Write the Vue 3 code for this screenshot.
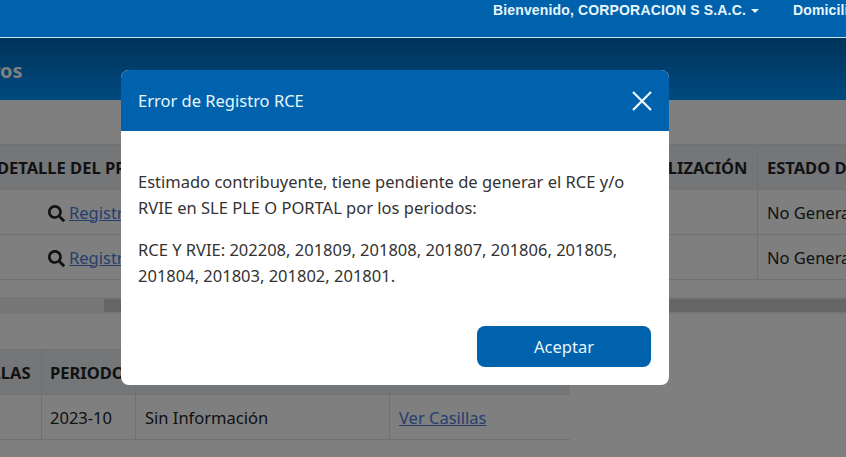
<template>
  <div class="page">
    <header class="topbar">
      <a class="welcome">Bienvenido, CORPORACION S S.A.C.<span class="caret"></span></a>
      <a class="domicilio">Domicilio</a>
    </header>
    <div class="band">
      <span class="band-title">Mis Registros</span>
    </div>
    <main class="content">
      <div class="scroll-wrap">
        <table class="grid grid-top">
          <colgroup>
            <col v-for="w in topCols" :key="w" :style="{ width: `${w}px` }" />
          </colgroup>
          <thead>
            <tr>
              <th>DETALLE DEL PROCESO</th>
              <th></th>
              <th>FECHA DE ACTUALIZACIÓN</th>
              <th>ESTADO DEL REGISTRO</th>
            </tr>
          </thead>
          <tbody>
            <tr v-for="row in 2" :key="row">
              <td class="action">
                <svg class="search" viewBox="0 0 512 512">
                  <path d="M505 442.700L405.300 343c-4.500-4.500-10.600-7-17-7H372c27.600-35.300 44-79.700 44-128C416 93.100 322.900 0 208 0S0 93.100 0 208s93.100 208 208 208c48.300 0 92.700-16.400 128-44v16.300c0 6.400 2.500 12.500 7 17l99.700 99.700c9.400 9.400 24.600 9.400 33.900 0l28.300-28.300c9.400-9.400 9.400-24.600.1-34zM208 336c-70.700 0-128-57.200-128-128 0-70.700 57.200-128 128-128 70.700 0 128 57.200 128 128 0 70.700-57.200 128-128 128z" />
                </svg>
                <a class="link">Registrar</a>
              </td>
              <td></td>
              <td></td>
              <td>No Generado</td>
            </tr>
          </tbody>
        </table>
      </div>
      <div class="scrollbar"><div class="thumb"></div></div>
      <table class="grid grid-bottom">
        <colgroup>
          <col v-for="w in bottomCols" :key="w" :style="{ width: `${w}px` }" />
        </colgroup>
        <thead>
          <tr>
            <th>CASILLAS</th>
            <th>PERIODO</th>
            <th></th>
            <th></th>
          </tr>
        </thead>
        <tbody>
          <tr>
            <td></td>
            <td>2023-10</td>
            <td>Sin Información</td>
            <td><a class="link">Ver Casillas</a></td>
          </tr>
        </tbody>
      </table>
    </main>

    <div class="backdrop">
      <section class="modal">
        <div class="modal-head">
          <h2>Error de Registro RCE</h2>
          <svg class="close" viewBox="0 0 20 20">
            <path d="M1 1L19 19M19 1L1 19" />
          </svg>
        </div>
        <div class="modal-body">
          <p>Estimado contribuyente, tiene pendiente de generar el RCE y/o RVIE en SLE PLE O PORTAL por los periodos:</p>
          <p>RCE Y RVIE: 202208, 201809, 201808, 201807, 201806, 201805, 201804, 201803, 201802, 201801.</p>
        </div>
        <div class="modal-foot">
          <button class="accept">Aceptar</button>
        </div>
      </section>
    </div>
  </div>
</template>

<script setup>
const topCols = [261, 272, 237, 220];
const bottomCols = [100, 94, 254, 180];
</script>

<style>
html,
body {
  margin: 0;
  height: 100%;
  overflow: hidden;
  background: #fff;
}
</style>

<style scoped>
.page {
  position: relative;
  width: 846px;
  height: 457px;
  overflow: hidden;
  font-family: "Noto Sans", "Open Sans", sans-serif;
  font-size: 16.5px;
  color: #212529;
}

.topbar {
  position: relative;
  z-index: 3;
  box-sizing: border-box;
  height: 38px;
  display: flex;
  gap: 34px;
  padding: 3px 0 0 493px;
  overflow: hidden;
  background: #0062ad;
  border-bottom: 1px solid #c4e8f0;
  color: #e6f6fb;
  font-family: "Liberation Sans", Arial, sans-serif;
  font-size: 14px;
  font-weight: 700;
  letter-spacing: 0.15px;
  white-space: nowrap;
  line-height: 15px;
}

.caret {
  display: inline-block;
  width: 0;
  height: 0;
  margin-left: 5px;
  vertical-align: 2px;
  border-top: 4px solid #e6f6fb;
  border-left: 4px solid transparent;
  border-right: 4px solid transparent;
}

.band {
  box-sizing: border-box;
  height: 62px;
  padding-top: 3px;
  display: flex;
  align-items: center;
  background: linear-gradient(#0066b3, #0094ff);
}

.band-title {
  margin-left: -111px;
  font-size: 20px;
  font-weight: 700;
  color: #fff;
  white-space: nowrap;
}

.content {
  padding-top: 44px;
}

.scroll-wrap {
  overflow: hidden;
}

.grid {
  table-layout: fixed;
  border-collapse: collapse;
  white-space: nowrap;
}

.grid th,
.grid td {
  box-sizing: border-box;
  height: 45px;
  padding: 0 9px;
  border: 1px solid #dee2e6;
  text-align: left;
  overflow: hidden;
}

.grid th {
  background: #eaedf0;
  font-weight: 700;
}

.grid-top {
  width: 990px;
  margin-left: -13px;
}

.grid-bottom {
  width: 628px;
  margin: 35px 0 0 -59px;
}

.grid-bottom th:first-child {
  padding-left: 12px;
}

.grid-bottom th:nth-child(2),
.grid-bottom td:nth-child(2) {
  padding-left: 8px;
}

.grid-bottom th:last-child,
.grid-bottom td:last-child {
  border-right: 0;
}

.grid .action {
  padding-left: 60px;
}

.search {
  width: 17px;
  height: 17px;
  vertical-align: -3px;
  fill: #212529;
}

.link {
  margin-left: 4px;
  color: #4a80e0;
  text-decoration: underline;
}

.grid-bottom .link {
  margin-left: 0;
}

.scrollbar {
  height: 17px;
  margin-top: 17px;
  background: #ededed;
}

.thumb {
  height: 13px;
  margin-left: 104px;
  position: relative;
  top: 2px;
  background: #cdcdcd;
}

.backdrop {
  position: absolute;
  z-index: 2;
  inset: 38px 0 0;
  background: rgba(0, 0, 0, 0.5);
}

.modal {
  position: absolute;
  left: 121px;
  top: 32px;
  width: 548px;
  height: 315px;
  display: flex;
  flex-direction: column;
  overflow: hidden;
  border-radius: 8px;
  background: #fff;
}

.modal-head {
  height: 61px;
  flex: none;
  display: flex;
  align-items: center;
  justify-content: space-between;
  padding: 0 17px;
  background: #0062ad;
}

.modal-head h2 {
  margin: 0;
  font-size: 16.5px;
  font-weight: 400;
  color: #e6f6fb;
}

.close {
  width: 20px;
  height: 20px;
  fill: none;
  stroke: #f2fbfd;
  stroke-width: 2.2;
}

.modal-body {
  flex: 1;
  padding: 38px 17px 0;
  line-height: 26px;
  color: #333;
}

.modal-body p {
  margin: 0 0 16px;
}

.modal-foot {
  display: flex;
  justify-content: flex-end;
  padding: 0 18px 18px;
}

.accept {
  width: 174px;
  height: 41px;
  border: 0;
  border-radius: 8px;
  background: #0062ad;
  color: #e6f6fb;
  font: inherit;
}
</style>
